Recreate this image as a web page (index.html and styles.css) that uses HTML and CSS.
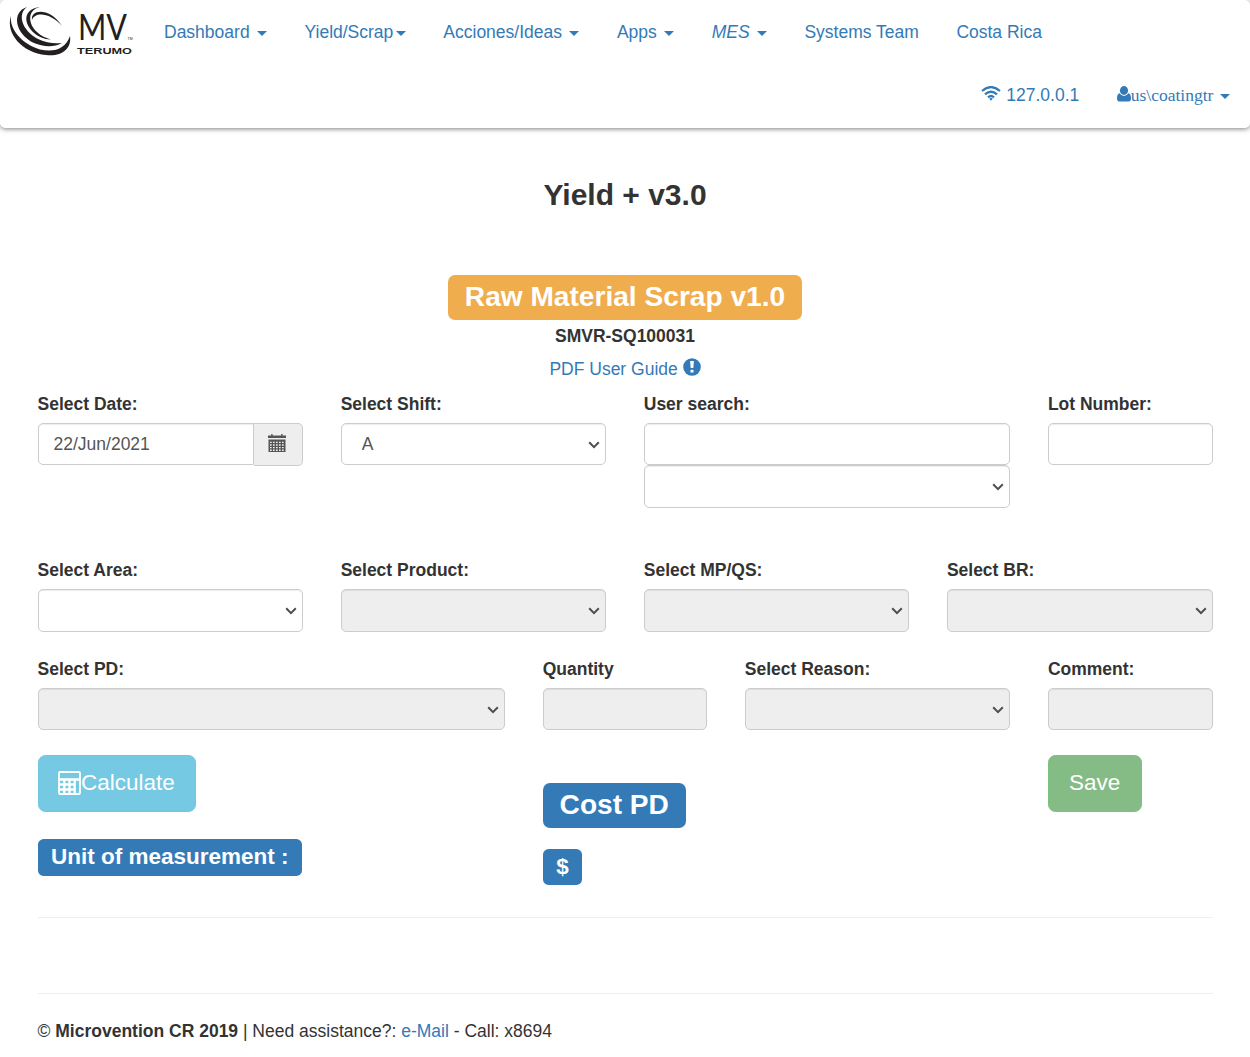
FILE: index.html
```html
<!DOCTYPE html>
<html lang="en">
<head>
<meta charset="utf-8">
<title>Yield + v3.0</title>
<link rel="stylesheet" href="styles.css">
</head>
<body>
<svg class="defs" aria-hidden="true">
  <symbol id="chevron" viewBox="0 0 12 8"><path d="M1.2 1.3 6 6.1l4.800-4.800" fill="none" stroke="#4d4d4d" stroke-width="2"/></symbol>
</svg>
<header class="navbar">
  <div class="nav-main">
    <a class="brand" href="#" aria-label="MV Terumo">
      <svg width="145" height="62" viewBox="0 0 145 62">
        <g fill="#231f20">
          <path d="M11 15.500C9 29 22 44 40 49.500C55 53 66 48 70 36C72 49 61 57 46 55C23 53 5 34 11 15.500Z"/>
          <path d="M27 7C17 14 22 30 37 38.500C46 43 55 44 62 43C54 47.500 43 47 34 43C15 34 11 12 27 7Z"/>
          <path d="M40 7C27 10 28 24 37 32C41 36 46 38 51 39.500C44 39.500 38 36.500 34 33C23 23 23 9 40 7Z"/>
          <path d="M32 20C30 9 50 7 62 26C51 13 35 11 32 20Z"/>
        </g>
        <text class="brand-mv" x="78" y="40" textLength="49" lengthAdjust="spacingAndGlyphs">MV</text>
        <text class="brand-tm" x="127.500" y="40">TM</text>
        <text class="brand-name" x="77" y="54" textLength="55" lengthAdjust="spacingAndGlyphs">TERUMO</text>
      </svg>
    </a>
    <nav class="menu">
      <a href="#">Dashboard <span class="caret"></span></a>
      <a href="#">Yield/Scrap<span class="caret"></span></a>
      <a href="#">Acciones/Ideas <span class="caret"></span></a>
      <a href="#">Apps <span class="caret"></span></a>
      <a href="#"><em>MES</em> <span class="caret"></span></a>
      <a href="#">Systems Team</a>
      <a href="#">Costa Rica</a>
    </nav>
  </div>
  <nav class="menu menu-right">
    <a href="#"><svg class="wifi" width="20" height="15" viewBox="0 0 20 15" fill="none" stroke="currentColor" stroke-width="2.300"><path d="M1 5Q10-2.800 19 5M4 8.300Q10 3.200 16 8.300M7 11.300Q10 8.800 13 11.300"/><path d="M8.200 12.700Q10 11.500 11.800 12.700L10 14.700Z" fill="currentColor" stroke="none"/></svg> 127.0.0.1</a>
    <a class="user" href="#"><svg class="person" width="14" height="16" viewBox="0 0 14 16" fill="currentColor"><ellipse cx="7" cy="4.500" rx="4.100" ry="4.400"/><path d="M2.700 7.300Q4.300 10 7 10T11.300 7.300Q14 7.900 14 12.300Q14 15.400 12 15.400H2Q0 15.400 0 12.300Q0 7.900 2.700 7.300Z"/></svg>us\coatingtr <span class="caret"></span></a>
  </nav>
</header>

<main class="page">
  <h3 class="title">Yield + v3.0</h3>
  <div class="intro">
    <span class="tag tag-lg tag-warning">Raw Material Scrap v1.0</span>
    <strong class="doc">SMVR-SQ100031</strong>
    <a class="guide" href="#">PDF User Guide <svg class="alert" width="18" height="18" viewBox="0 0 18 18"><circle cx="9" cy="9" r="8.800" fill="currentColor"/><path d="M7.100 3.600Q7 3 7.600 3H10.400Q11 3 10.900 3.600L10.300 10H7.700Z" fill="#fff"/><rect x="7.500" y="11.700" width="3" height="2.900" rx=".4" fill="#fff"/></svg></a>
  </div>

  <form>
    <div class="row row-first">
      <div class="c3">
        <label for="date">Select Date:</label>
        <div class="input-group">
          <input id="date" class="control" type="text" value="22/Jun/2021">
          <span class="addon"><svg width="18" height="18" viewBox="0 0 18 18"><path d="M0 4V1.500H3.200V0H4.600V1.500H13.200V0H14.600V1.500H18V4ZM.5 5.500H17.500V18H.5Z" fill="#555"/><path d="M2 8.400H16M2 11H16M2 13.600H16M2 16.200H16" stroke="#eee" stroke-width="1.400" stroke-dasharray="1.700 1.300"/></svg></span>
        </div>
      </div>
      <div class="c3">
        <label for="shift">Select Shift:</label>
        <div class="select"><select id="shift" class="control"><option>A</option></select><svg><use href="#chevron"/></svg></div>
      </div>
      <div class="c4">
        <label for="user">User search:</label>
        <input id="user" class="control" type="text">
        <div class="select"><select class="control" aria-label="User"></select><svg><use href="#chevron"/></svg></div>
      </div>
      <div class="c2">
        <label for="lot">Lot Number:</label>
        <input id="lot" class="control" type="text">
      </div>
    </div>

    <div class="row">
      <div class="c3">
        <label for="area">Select Area:</label>
        <div class="select"><select id="area" class="control"></select><svg><use href="#chevron"/></svg></div>
      </div>
      <div class="c3">
        <label for="product">Select Product:</label>
        <div class="select"><select id="product" class="control" disabled></select><svg><use href="#chevron"/></svg></div>
      </div>
      <div class="c3">
        <label for="mp">Select MP/QS:</label>
        <div class="select"><select id="mp" class="control" disabled></select><svg><use href="#chevron"/></svg></div>
      </div>
      <div class="c3">
        <label for="br">Select BR:</label>
        <div class="select"><select id="br" class="control" disabled></select><svg><use href="#chevron"/></svg></div>
      </div>
    </div>

    <div class="row">
      <div class="c5">
        <label for="pd">Select PD:</label>
        <div class="select"><select id="pd" class="control" disabled></select><svg><use href="#chevron"/></svg></div>
      </div>
      <div class="c2">
        <label for="qty">Quantity</label>
        <input id="qty" class="control" type="text" disabled>
      </div>
      <div class="c3">
        <label for="reason">Select Reason:</label>
        <div class="select"><select id="reason" class="control" disabled></select><svg><use href="#chevron"/></svg></div>
      </div>
      <div class="c2">
        <label for="comment">Comment:</label>
        <input id="comment" class="control" type="text" disabled>
      </div>
    </div>

    <div class="row row-actions">
      <div class="c5 stack">
        <button class="btn btn-info" type="button" disabled><svg width="23" height="24" viewBox="0 0 23 24" fill="none" stroke="#fff"><rect x="1" y="1" width="21" height="22" rx="1" stroke-width="1.800"/><path d="M1 8.500H22" stroke-width="2.600"/><path d="M1 13.500H17M1 18.500H17M6.300 9V23M11.500 9V23M16.700 9V23" stroke-width="2.300"/></svg><span>Calculate</span></button>
        <span class="tag tag-primary">Unit of measurement :</span>
      </div>
      <div class="c5 stack cost">
        <span class="tag tag-lg tag-primary">Cost PD</span>
        <span class="tag tag-primary tag-money">$</span>
      </div>
      <div class="c2">
        <button class="btn btn-success" type="button" disabled><span>Save</span></button>
      </div>
    </div>
  </form>
  <hr>
  <hr class="hr-footer">
  <footer>© <strong>Microvention CR 2019</strong> | Need assistance?: <a href="#">e-Mail</a> - Call: x8694</footer>
</main>
</body>
</html>
```

FILE: styles.css
```css
* { box-sizing: border-box; }

body {
  margin: 0;
  background: #fff;
  color: #333;
  font: 17.5px/25px "Liberation Sans", Arial, sans-serif;
}

a { color: #337ab7; text-decoration: none; }
.defs { display: none; }

/* Navigation */
.navbar {
  height: 128px;
  border-radius: 5px;
  background: #fff;
  box-shadow: 0 1px 5px rgba(0, 0, 0, .5);
}
.nav-main { display: flex; height: 63px; }
.brand { width: 145.25px; }
.brand svg { display: block; }
.brand-mv { font: 400 36px Lato, "Liberation Sans", sans-serif; fill: #231f20; }
.brand-tm { font: 3.500px "Liberation Sans", sans-serif; fill: #231f20; }
.brand-name { font: bold 9.5px "Liberation Sans", sans-serif; fill: #231f20; }
.menu { display: flex; }
.menu a { padding: 20px 18.75px 18px; white-space: nowrap; }
.menu-right { justify-content: flex-end; padding-right: 1px; }
.menu .user { font-family: "Liberation Serif", "Times New Roman", serif; }
.caret {
  display: inline-block;
  margin-left: 2.5px;
  vertical-align: middle;
  border-top: 5px solid;
  border-right: 5px solid transparent;
  border-left: 5px solid transparent;
}
.wifi { vertical-align: 0; }
.person { vertical-align: -1px; }

/* Heading */
.page { padding: 0 37.5px; }
.title {
  margin: 0;
  padding-top: 50px;
  font-size: 30px;
  line-height: 33px;
  text-align: center;
}
.intro {
  display: flex;
  flex-direction: column;
  align-items: center;
  padding-top: 64px;
}
.doc { margin-top: 4px; }
.guide { margin-top: 8px; }
.alert { vertical-align: -1px; }

.tag {
  height: 37px;
  padding: 4.5px 13.5px 0;
  border-radius: 5.6px;
  color: #fff;
  font-size: 22.5px;
  font-weight: bold;
  line-height: 26px;
  white-space: nowrap;
}
.tag-lg {
  height: 45px;
  padding: 5.500px 16.875px 0;
  border-radius: 7px;
  font-size: 28.125px;
  line-height: 32px;
}
.tag-warning { background: #f0ad4e; }
.tag-primary { background: #337ab7; }

/* Form */
.row {
  display: grid;
  grid-template-columns: repeat(12, minmax(0, 1fr));
  column-gap: 37.5px;
  height: 98.75px;
}
.row-first { height: 166.25px; margin-top: 9.5px; }
.c2 { grid-column: span 2; }
.c3 { grid-column: span 3; }
.c4 { grid-column: span 4; }
.c5 { grid-column: span 5; }
label { display: block; margin-bottom: 6.250px; font-weight: bold; }
.control {
  display: block;
  width: 100%;
  height: 42.5px;
  margin: 0;
  padding: 7.500px 15px;
  border: 1px solid #ccc;
  border-radius: 5px;
  background: #fff;
  box-shadow: inset 0 1px 1px rgba(0, 0, 0, .075);
  color: #555;
  font: inherit;
  opacity: 1;
  appearance: none;
}
.control:disabled { background: #eee; }
.select { position: relative; }
.select .control { padding-left: 20px; }
.select svg {
  position: absolute;
  top: 18px;
  right: 6px;
  width: 12px;
  height: 8px;
  pointer-events: none;
}
.input-group { display: flex; }
.input-group .control { flex: 1; min-width: 0; border-radius: 5px 0 0 5px; }
.addon {
  display: flex;
  align-items: center;
  justify-content: center;
  width: 49px;
  height: 43px;
  padding: 0 2px 3px 0;
  border: 1px solid #ccc;
  border-left: 0;
  border-radius: 0 5px 5px 0;
  background: #eee;
}

.row-actions { height: 162px; }
.stack { display: flex; flex-direction: column; align-items: flex-start; }
.stack .btn { margin-bottom: 27px; }
.cost { padding-top: 28px; gap: 21px; }
.tag-money { height: 36px; }
.btn {
  display: flex;
  align-items: center;
  height: 57px;
  padding: 0 20px 1px 19.500px;
  border: 1px solid;
  border-radius: 7.500px;
  color: #fff;
  font: 22.5px/30px "Liberation Sans", Arial, sans-serif;
}
.btn-info { background: #76c9e2; border-color: #6fc7e0; }
.btn-success { padding-right: 20.500px; padding-left: 20px; background: #85bc85; border-color: #7dbf7d; }

hr { height: 1px; margin: 0; border: 0; background: #eee; }
.hr-footer { margin-top: 75px; }
footer { padding-top: 25px; }
```
